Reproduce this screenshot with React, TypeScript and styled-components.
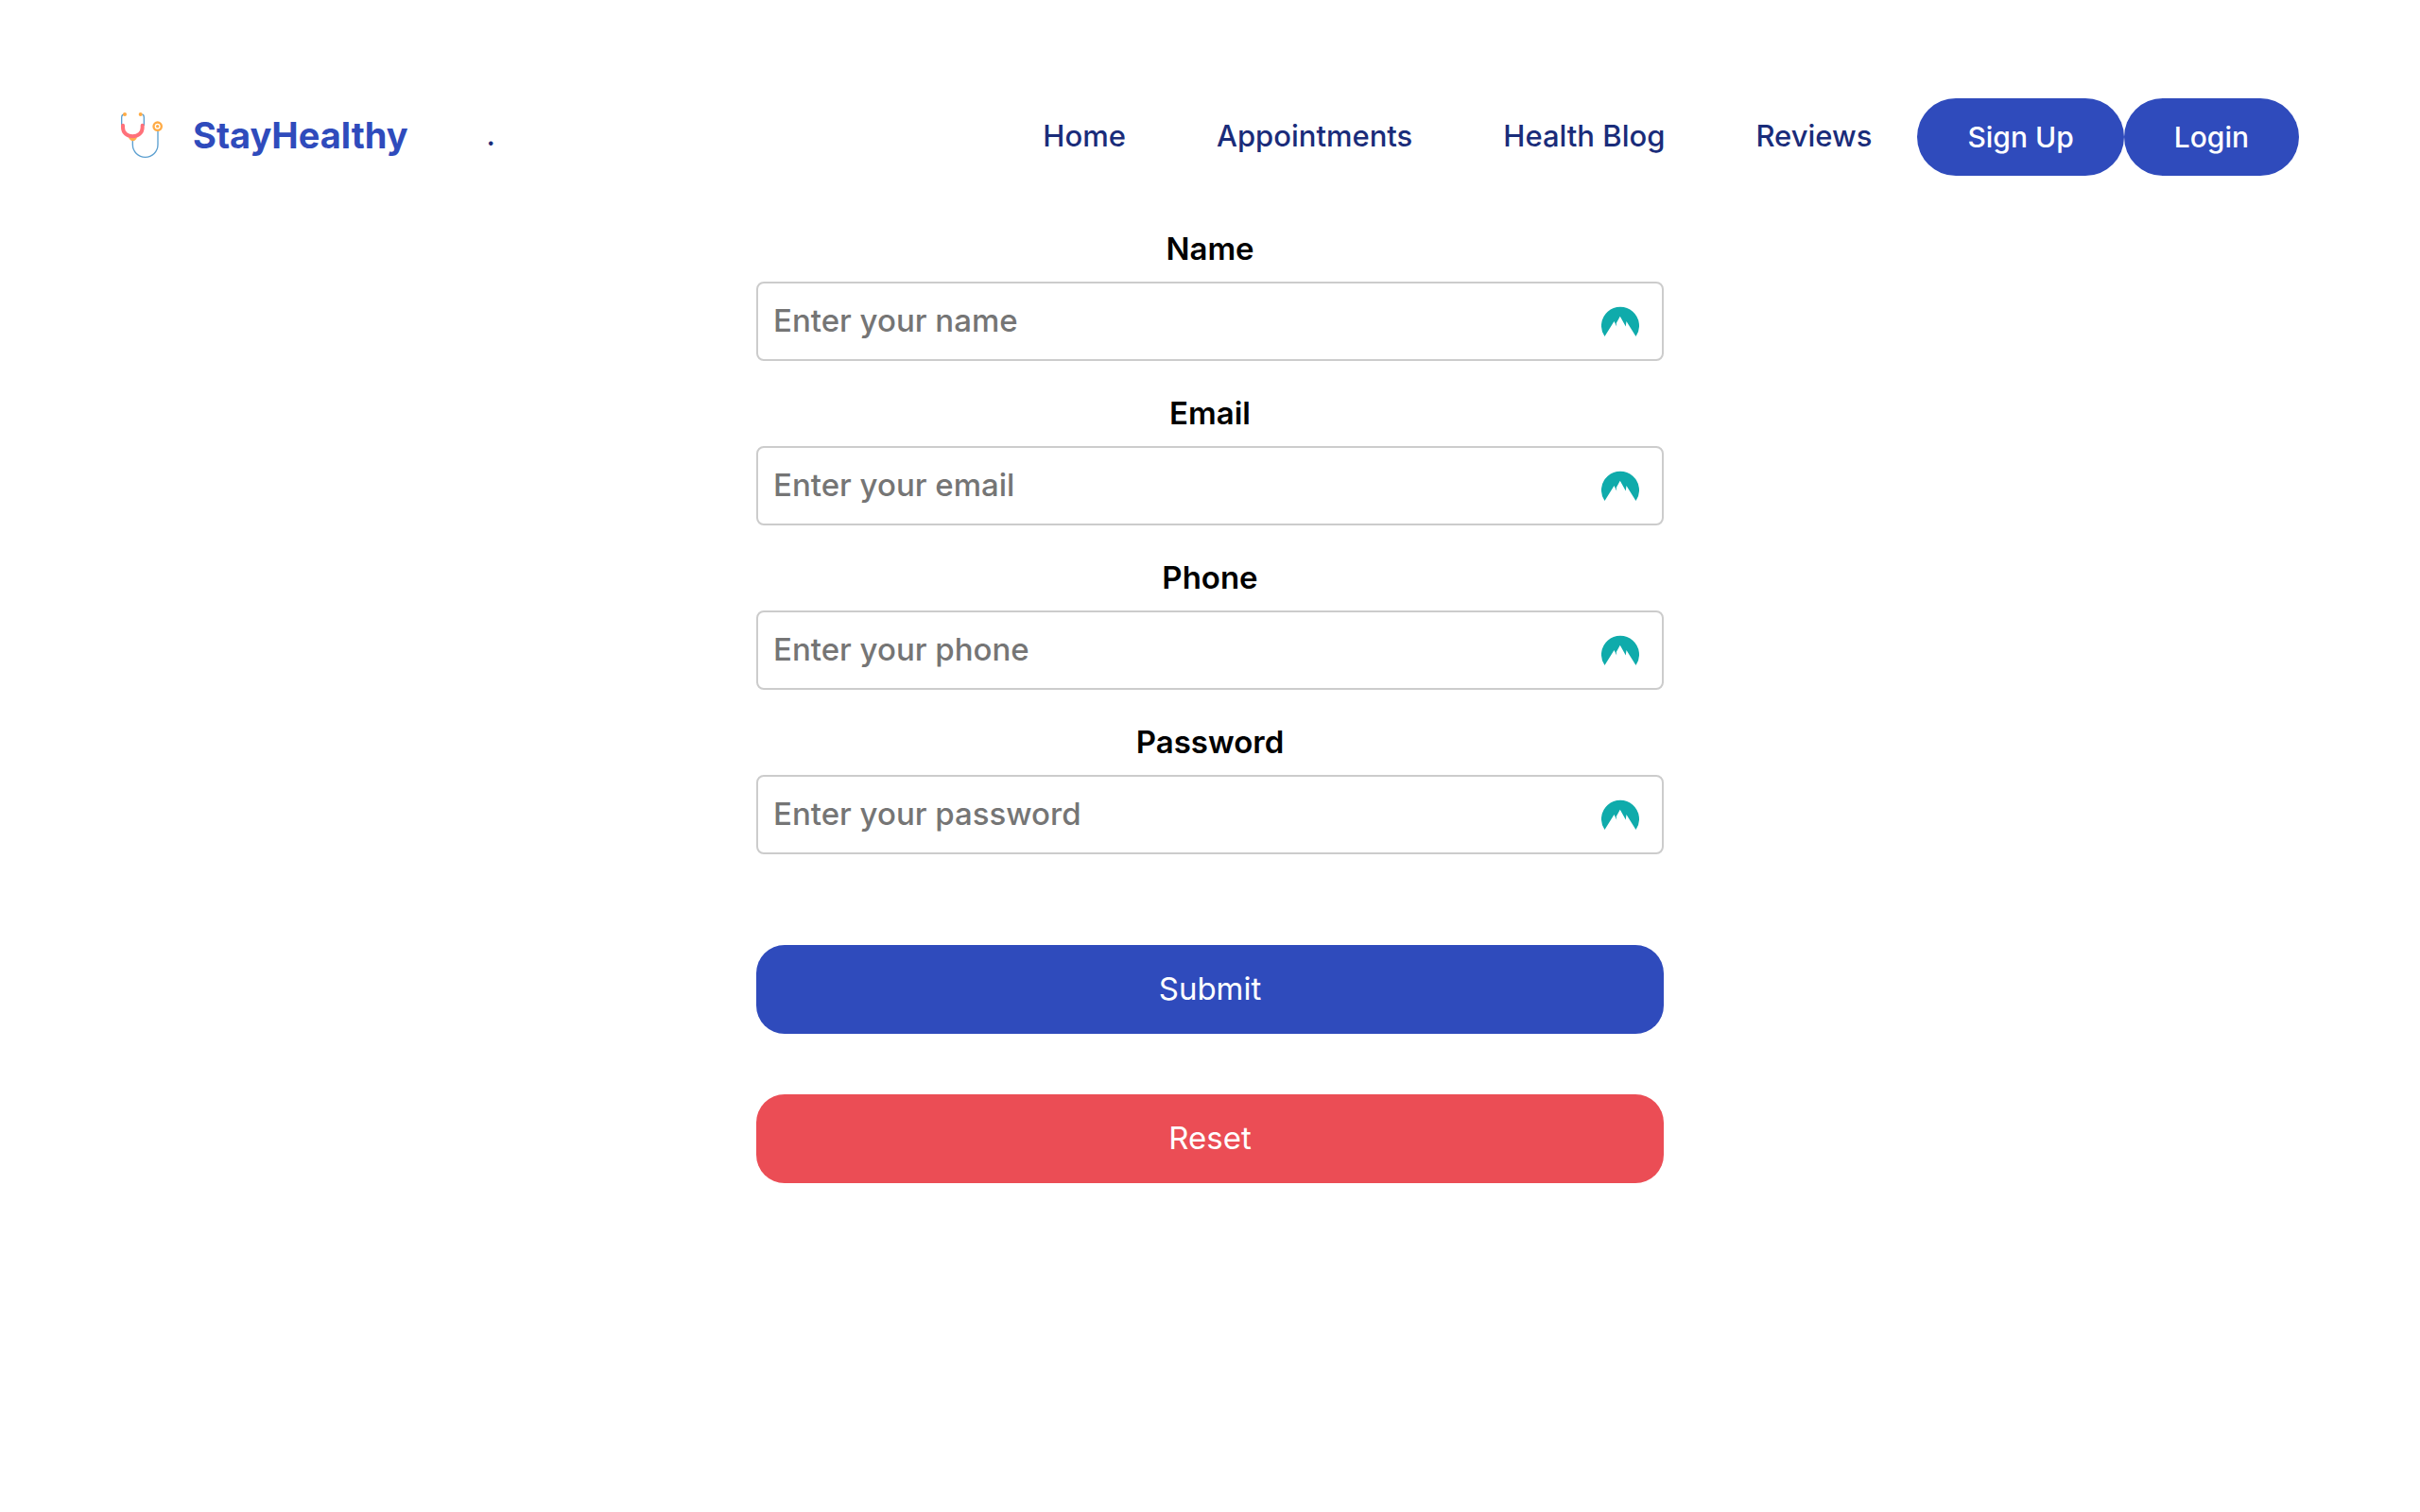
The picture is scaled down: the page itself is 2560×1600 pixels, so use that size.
import React from 'react';
import styled, { createGlobalStyle } from 'styled-components';

const GlobalStyle = createGlobalStyle`
  *, *::before, *::after { box-sizing: border-box; }
  body {
    margin: 0;
    background: #ffffff;
    font-family: Inter, "Noto Sans", sans-serif;
    font-weight: 500;
  }
`;

const Header = styled.header`
  display: flex;
  align-items: center;
  justify-content: space-between;
  padding: 104px 128px 0;
`;

const Brand = styled.div`
  display: flex;
  align-items: center;
  gap: 83px;
  padding-bottom: 5px;
  color: #1a2c7a;
  font-size: 31px;
  line-height: 40px;
`;

const LogoLink = styled.a`
  display: flex;
  align-items: center;
  gap: 32px;
  color: #2f4bbc;
  font-size: 38px;
  font-weight: 700;
  line-height: 48px;
  text-decoration: none;
`;

const LogoIcon = styled.svg`
  width: 44px;
  height: 48px;
`;

const Nav = styled.nav`
  display: flex;
  align-items: center;
`;

const NavLink = styled.a`
  padding: 0 48px 3px;
  color: #1a2c7a;
  font-size: 31px;
  line-height: 40px;
  text-decoration: none;
`;

const PillButton = styled.button`
  height: 82px;
  padding: 0 53px;
  border: 0;
  border-radius: 41px;
  background: #2f4bbc;
  color: #ffffff;
  font-family: inherit;
  font-size: 30px;
  font-weight: 500;
  line-height: 40px;
  cursor: pointer;
`;

const Form = styled.form`
  display: flex;
  flex-direction: column;
  width: 100%;
  max-width: 960px;
  margin: 57px auto 0;
`;

const Fields = styled.div`
  display: flex;
  flex-direction: column;
  gap: 35px;
`;

const Field = styled.div`
  display: flex;
  flex-direction: column;
  gap: 15px;
`;

const Label = styled.label`
  color: #000000;
  font-size: 33px;
  font-weight: 600;
  line-height: 40px;
  text-align: center;
`;

const InputBox = styled.div`
  display: flex;
  align-items: center;
  height: 84px;
  padding: 0 24px 0 16px;
  border: 2px solid #cccccc;
  border-radius: 8px;
`;

const Input = styled.input`
  flex: 1;
  min-width: 0;
  padding: 0 0 3px;
  border: 0;
  outline: 0;
  background: transparent;
  color: #000000;
  font-family: inherit;
  font-size: 33px;
  font-weight: 500;
  line-height: 40px;

  &::placeholder {
    color: #757575;
    opacity: 1;
  }
`;

const PeakIcon = styled.svg`
  width: 40px;
  height: 32px;
`;

const Actions = styled.div`
  display: flex;
  flex-direction: column;
  gap: 64px;
  margin-top: 96px;
`;

const ActionButton = styled.button<{ $color: string }>`
  height: 94px;
  padding: 0 0 2px;
  border: 0;
  border-radius: 30px;
  background: ${({ $color }) => $color};
  color: #ffffff;
  font-family: inherit;
  font-size: 33px;
  font-weight: 400;
  line-height: 40px;
  cursor: pointer;
`;

const links = ['Home', 'Appointments', 'Health Blog', 'Reviews'];

const fields = [
  { id: 'name', label: 'Name', type: 'text' },
  { id: 'email', label: 'Email', type: 'email' },
  { id: 'phone', label: 'Phone', type: 'tel' },
  { id: 'password', label: 'Password', type: 'password' },
];

function Stethoscope() {
  return (
    <LogoIcon viewBox="24 24 132 144" fill="none" aria-hidden="true">
      <path d="M36 30Q26 30 26 40V66M91 30Q97 31 97 40V66" stroke="#5b9fd0" strokeWidth="4" />
      <path d="M61 112V126A40 40 0 0 0 141 126V82" stroke="#5b9fd0" strokeWidth="4" />
      <path d="M48 103H75Q71 114 62 115Q52 114 48 103Z" fill="#ffb04c" />
      <path d="M30 65V72C30 89 44 100 61 100S92 89 92 72V65" stroke="#ff717a" strokeWidth="12" strokeLinecap="round" />
      <circle cx="36" cy="30" r="6" fill="#ffab45" />
      <circle cx="86" cy="30" r="6" fill="#ffab45" />
      <circle cx="140" cy="68" r="16" fill="#ffab45" />
      <circle cx="140" cy="68" r="7" stroke="#ffffff" strokeWidth="4" />
    </LogoIcon>
  );
}

function Peak() {
  return (
    <PeakIcon viewBox="0 0 40 32" aria-hidden="true">
      <path
        fill="#0fabab"
        d="M3.5 32A20 20 0 1 1 36.5 32L26.5 16L25.8 21.5L19.8 10.7L15.8 18L16.2 21.5L13.5 16Z"
      />
    </PeakIcon>
  );
}

export default function App() {
  return (
    <>
      <GlobalStyle />
      <Header>
        <Brand>
          <LogoLink href="#">
            <Stethoscope />
            StayHealthy
          </LogoLink>
          <span>.</span>
        </Brand>
        <Nav>
          {links.map((text) => (
            <NavLink href="#" key={text}>{text}</NavLink>
          ))}
          <PillButton type="button">Sign Up</PillButton>
          <PillButton type="button">Login</PillButton>
        </Nav>
      </Header>
      <main>
        <Form onSubmit={(event) => event.preventDefault()}>
          <Fields>
            {fields.map(({ id, label, type }) => (
              <Field key={id}>
                <Label htmlFor={id}>{label}</Label>
                <InputBox>
                  <Input id={id} name={id} type={type} placeholder={`Enter your ${id}`} />
                  <Peak />
                </InputBox>
              </Field>
            ))}
          </Fields>
          <Actions>
            <ActionButton type="submit" $color="#2f4bbc">Submit</ActionButton>
            <ActionButton type="reset" $color="#eb4d55">Reset</ActionButton>
          </Actions>
        </Form>
      </main>
    </>
  );
}
